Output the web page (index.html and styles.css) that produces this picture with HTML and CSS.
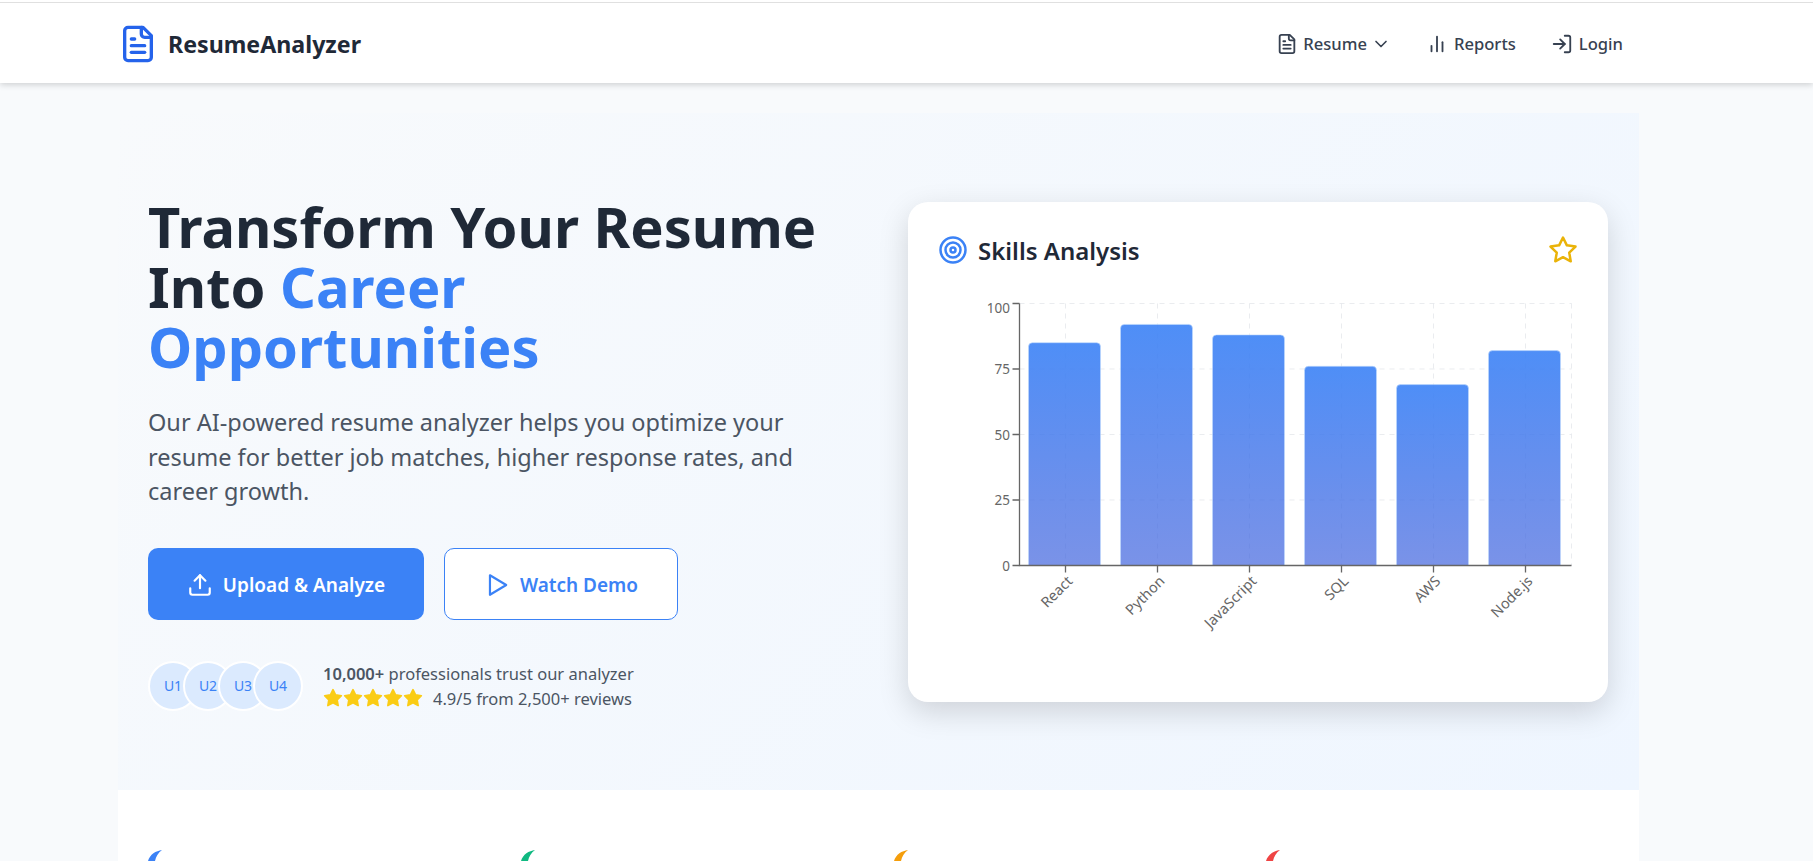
FILE: index.html
```html
<!DOCTYPE html>
<html lang="en">
<head>
<meta charset="utf-8">
<title>ResumeAnalyzer</title>
<link rel="stylesheet" href="styles.css">
</head>
<body>
<nav class="nav">
  <a class="brand">
    <svg class="brand-icon" viewBox="0 0 24 24"><path d="M15 2H6a2 2 0 0 0-2 2v16a2 2 0 0 0 2 2h12a2 2 0 0 0 2-2V7Z"/><path d="M14 2v4a2 2 0 0 0 2 2h4"/><path d="M10 9H8"/><path d="M16 13H8"/><path d="M16 17H8"/></svg>
    <span>ResumeAnalyzer</span>
  </a>
  <div class="nav-links">
    <a class="nav-link">
      <svg class="nav-icon nav-icon-doc" viewBox="0 0 24 24"><path d="M15 2H6a2 2 0 0 0-2 2v16a2 2 0 0 0 2 2h12a2 2 0 0 0 2-2V7Z"/><path d="M14 2v4a2 2 0 0 0 2 2h4"/><path d="M10 9H8"/><path d="M16 13H8"/><path d="M16 17H8"/></svg>
      <span>Resume</span>
      <svg class="nav-chevron" viewBox="0 0 24 24"><path d="m6 9 6 6 6-6"/></svg>
    </a>
    <a class="nav-link">
      <svg class="nav-icon" viewBox="0 0 24 24"><path d="M18 20V10"/><path d="M12 20V4"/><path d="M6 20v-6"/></svg>
      <span>Reports</span>
    </a>
    <a class="nav-link">
      <svg class="nav-icon" viewBox="0 0 24 24"><path d="M15 3h4a2 2 0 0 1 2 2v14a2 2 0 0 1-2 2h-4"/><path d="m10 17 5-5-5-5"/><path d="M15 12H3"/></svg>
      <span>Login</span>
    </a>
  </div>
</nav>
<main class="main">
  <section class="hero">
    <div class="hero-copy">
      <h1 class="title">Transform Your Resume Into <span class="accent">Career Opportunities</span></h1>
      <p class="lead">Our AI-powered resume analyzer helps you optimize your resume for better job matches, higher response rates, and career growth.</p>
      <div class="actions">
        <a class="btn btn-primary">
          <svg class="btn-icon" viewBox="0 0 24 24"><path d="M21 15v4a2 2 0 0 1-2 2H5a2 2 0 0 1-2-2v-4"/><path d="m17 8-5-5-5 5"/><path d="M12 3v12"/></svg>
          Upload &amp; Analyze
        </a>
        <a class="btn btn-outline">
          <svg class="btn-icon" viewBox="0 0 24 24"><path d="M5.5 3 20.5 12 5.5 21Z"/></svg>
          Watch Demo
        </a>
      </div>
      <div class="trust">
        <div class="avatars">
          <span class="avatar">U1</span><span class="avatar">U2</span><span class="avatar">U3</span><span class="avatar">U4</span>
        </div>
        <div class="trust-text">
          <div><strong>10,000+</strong> professionals trust our analyzer</div>
          <div class="rating">
            <span class="stars">
              <svg viewBox="0 0 24 24"><path d="M12 2l3.09 6.26L22 9.27l-5 4.87 1.18 6.88L12 17.77l-6.18 3.25L7 14.14 2 9.27l6.91-1.01L12 2z"/></svg>
              <svg viewBox="0 0 24 24"><path d="M12 2l3.09 6.26L22 9.27l-5 4.87 1.18 6.88L12 17.77l-6.18 3.25L7 14.14 2 9.27l6.91-1.01L12 2z"/></svg>
              <svg viewBox="0 0 24 24"><path d="M12 2l3.09 6.26L22 9.27l-5 4.87 1.18 6.88L12 17.77l-6.18 3.25L7 14.14 2 9.27l6.91-1.01L12 2z"/></svg>
              <svg viewBox="0 0 24 24"><path d="M12 2l3.09 6.26L22 9.27l-5 4.87 1.18 6.88L12 17.77l-6.18 3.25L7 14.14 2 9.27l6.91-1.01L12 2z"/></svg>
              <svg viewBox="0 0 24 24"><path d="M12 2l3.09 6.26L22 9.27l-5 4.87 1.18 6.88L12 17.77l-6.18 3.25L7 14.14 2 9.27l6.91-1.01L12 2z"/></svg>
            </span>
            <span>4.9/5 from 2,500+ reviews</span>
          </div>
        </div>
      </div>
    </div>
    <div class="card">
      <div class="card-head">
        <div class="card-title">
          <svg class="target" viewBox="0 0 24 24"><circle cx="12" cy="12" r="10"/><circle cx="12" cy="12" r="6"/><circle cx="12" cy="12" r="2"/></svg>
          <span>Skills Analysis</span>
        </div>
        <svg class="star-outline" viewBox="0 0 24 24"><path d="M12 2l3.09 6.26L22 9.27l-5 4.87 1.18 6.88L12 17.77l-6.18 3.25L7 14.14 2 9.27l6.91-1.01L12 2z"/></svg>
      </div>
      <svg class="chart" viewBox="0 0 636 360" width="636" height="360">
        <defs>
          <linearGradient id="barFill" x1="0" y1="0" x2="0" y2="1">
            <stop offset="0" stop-color="#3b82f6" stop-opacity="0.9"/>
            <stop offset="1" stop-color="#4164de" stop-opacity="0.7"/>
          </linearGradient>
        </defs>
        <g class="grid">
          <path d="M79.5 33.5H631.5M79.5 99H631.5M79.5 164.5H631.5M79.5 230H631.5"/>
          <path d="M125.5 33.5V295.5M217.5 33.5V295.5M309.5 33.5V295.5M401.5 33.5V295.5M493.5 33.5V295.5M585.5 33.5V295.5M631.5 33.5V295.5"/>
        </g>
        <g class="bars">
          <path d="M88.5 295.5V76.7a4 4 0 0 1 4-4h64a4 4 0 0 1 4 4V295.5Z"/>
          <path d="M180.5 295.5V58.4a4 4 0 0 1 4-4h64a4 4 0 0 1 4 4V295.5Z"/>
          <path d="M272.5 295.5V68.9a4 4 0 0 1 4-4h64a4 4 0 0 1 4 4V295.5Z"/>
          <path d="M364.5 295.5V100.3a4 4 0 0 1 4-4h64a4 4 0 0 1 4 4V295.5Z"/>
          <path d="M456.5 295.5V118.6a4 4 0 0 1 4-4h64a4 4 0 0 1 4 4V295.5Z"/>
          <path d="M548.5 295.5V84.6a4 4 0 0 1 4-4h64a4 4 0 0 1 4 4V295.5Z"/>
        </g>
        <path class="axis" d="M79.5 33.5V295.5H631.5"/>
        <path class="axis" d="M72.5 33.5H79.5M72.5 99H79.5M72.5 164.5H79.5M72.5 230H79.5M72.5 295.5H79.5"/>
        <path class="axis" d="M125.5 295.5V302.5M217.5 295.5V302.5M309.5 295.5V302.5M401.5 295.5V302.5M493.5 295.5V302.5M585.5 295.5V302.5"/>
        <g class="tick-y">
          <text x="70" y="43">100</text>
          <text x="70" y="104">75</text>
          <text x="70" y="169.5">50</text>
          <text x="70" y="235">25</text>
          <text x="70" y="300.5">0</text>
        </g>
        <g class="tick-x">
          <text transform="translate(133.5 312) rotate(-45)">React</text>
          <text transform="translate(225.5 312) rotate(-45)">Python</text>
          <text transform="translate(317.5 312) rotate(-45)">JavaScript</text>
          <text transform="translate(409.5 312) rotate(-45)">SQL</text>
          <text transform="translate(501.5 312) rotate(-45)">AWS</text>
          <text transform="translate(593.5 312) rotate(-45)">Node.js</text>
        </g>
      </svg>
    </div>
  </section>
  <section class="features">
    <svg class="crescent crescent-blue" viewBox="0 0 14 11"><path d="M14 0C8 .8 1.8 4.5 0 11H7C8 6.5 10 3 14 0Z"/></svg>
    <svg class="crescent crescent-green" viewBox="0 0 14 11"><path d="M14 0C8 .8 1.8 4.5 0 11H7C8 6.5 10 3 14 0Z"/></svg>
    <svg class="crescent crescent-orange" viewBox="0 0 14 11"><path d="M14 0C8 .8 1.8 4.5 0 11H7C8 6.5 10 3 14 0Z"/></svg>
    <svg class="crescent crescent-red" viewBox="0 0 14 11"><path d="M14 0C8 .8 1.8 4.5 0 11H7C8 6.5 10 3 14 0Z"/></svg>
  </section>
</main>
</body>
</html>
```

FILE: styles.css
```css
* { box-sizing: border-box; }
body {
  margin: 0;
  height: 861px;
  overflow: hidden;
  background: #f8fafc;
  font-family: "Noto Sans", "Open Sans", sans-serif;
  color: #1f2937;
}
.nav {
  position: relative;
  z-index: 2;
  height: 83px;
  padding: 4px 190px 0 118px;
  display: flex;
  align-items: center;
  justify-content: space-between;
  background: #fff;
  box-shadow: 0 2px 6px rgba(0,0,0,.16);
}
.nav::before {
  content: "";
  position: absolute;
  left: 0; right: 0; top: 2px;
  height: 1px;
  background: #e0e0e0;
}
.brand { display: flex; align-items: center; gap: 10px; font-size: 23.2px; font-weight: 700; color: #1f2937; }
.brand-icon { width: 40px; height: 40px; fill: none; stroke: #2563eb; stroke-width: 2; stroke-linecap: round; stroke-linejoin: round; }
.nav-links { display: flex; align-items: center; gap: 35px; }
.nav-link { display: flex; align-items: center; gap: 6px; font-size: 16.6px; font-weight: 500; color: #374151; }
.nav-icon { width: 22px; height: 22px; fill: none; stroke: #374151; stroke-width: 2; stroke-linecap: round; stroke-linejoin: round; }
.nav-icon-doc { margin-right: -1px; }
.nav-chevron { width: 20px; height: 20px; margin-left: -2px; fill: none; stroke: #374151; stroke-width: 2; stroke-linecap: round; stroke-linejoin: round; }
.main { width: 1521px; margin-left: 118px; padding-top: 30px; }
.hero {
  height: 677px;
  display: flex;
  justify-content: space-between;
  padding: 83px 31px 0 30px;
  background: linear-gradient(135deg, #f8fafc 0%, #eff6ff 100%);
}
.hero-copy { width: 680px; }
.title { margin: 0; font-size: 56px; line-height: 60px; font-weight: 700; color: #1f2937; }
.accent { color: #3b82f6; }
.lead { margin: 29px 0 0; width: 660px; font-size: 23.5px; line-height: 34.6px; color: #4b5563; }
.actions { display: flex; gap: 20px; margin-top: 39px; }
.btn { display: flex; align-items: center; justify-content: center; gap: 10px; height: 72px; padding-top: 2px; border-radius: 10px; font-size: 19px; font-weight: 600; }
.btn-primary { width: 276px; background: #3b82f6; color: #fff; }
.btn-outline { width: 234px; background: #fff; color: #3b82f6; border: 1px solid #3b82f6; }
.btn-icon { width: 26px; height: 26px; fill: none; stroke: currentColor; stroke-width: 2; stroke-linecap: round; stroke-linejoin: round; }
.trust { display: flex; align-items: center; gap: 20px; margin-top: 41px; }
.avatars { display: flex; }
.avatar { width: 50px; height: 50px; display: flex; align-items: center; justify-content: center; border-radius: 50%; background: #dbeafe; border: 2px solid #fff; color: #3b82f6; font-size: 14px; font-weight: 400; }
.avatar + .avatar { margin-left: -15px; }
.trust-text { font-size: 16.5px; line-height: 25px; color: #4b5563; }
.trust-text strong { font-weight: 600; }
.rating { display: flex; align-items: center; gap: 10px; }
.stars { display: flex; }
.stars svg { width: 20px; height: 20px; fill: #facc15; stroke: #facc15; stroke-width: 2; stroke-linejoin: round; }
.card {
  width: 700px;
  height: 500px;
  margin-top: 6px;
  padding: 30px 30px 0;
  background: #fff;
  border-radius: 20px;
  box-shadow: 0 10px 30px rgba(0,0,0,.15);
}
.card-head { display: flex; align-items: center; justify-content: space-between; }
.card-title { display: flex; align-items: center; gap: 10px; font-size: 24px; font-weight: 600; color: #1f2937; }
.card-title span { margin-top: 2px; }
.target { width: 30px; height: 30px; fill: none; stroke: #3b82f6; stroke-width: 2; }
.star-outline { width: 30px; height: 30px; fill: none; stroke: #eab308; stroke-width: 2; stroke-linecap: round; stroke-linejoin: round; }
.chart { display: block; margin: 3px 0 0 2px; overflow: visible; }
.grid path { fill: none; stroke: #e5e7eb; stroke-width: 1; stroke-dasharray: 5 5; opacity: .8; }
.bars path { fill: url(#barFill); stroke: #bfdbfe; stroke-width: 1; stroke-opacity: .6; }
.axis { fill: none; stroke: #666; stroke-width: 1.3; }
.tick-y text { font-family: "Noto Sans", sans-serif; font-size: 13.5px; fill: #666; text-anchor: end; }
.tick-x text { font-family: "Noto Sans", sans-serif; font-size: 14.5px; fill: #666; text-anchor: end; }
.features {
  height: 71px;
  padding: 60px 30px 0;
  display: grid;
  grid-template-columns: repeat(4, 1fr);
  gap: 30px;
  background: #fff;
  overflow: hidden;
}
.crescent { display: block; width: 14px; height: 11px; fill: currentColor; }
.crescent-blue { color: #3b82f6; }
.crescent-green { color: #10b981; }
.crescent-orange { color: #f59e0b; }
.crescent-red { color: #ef4444; }
```
